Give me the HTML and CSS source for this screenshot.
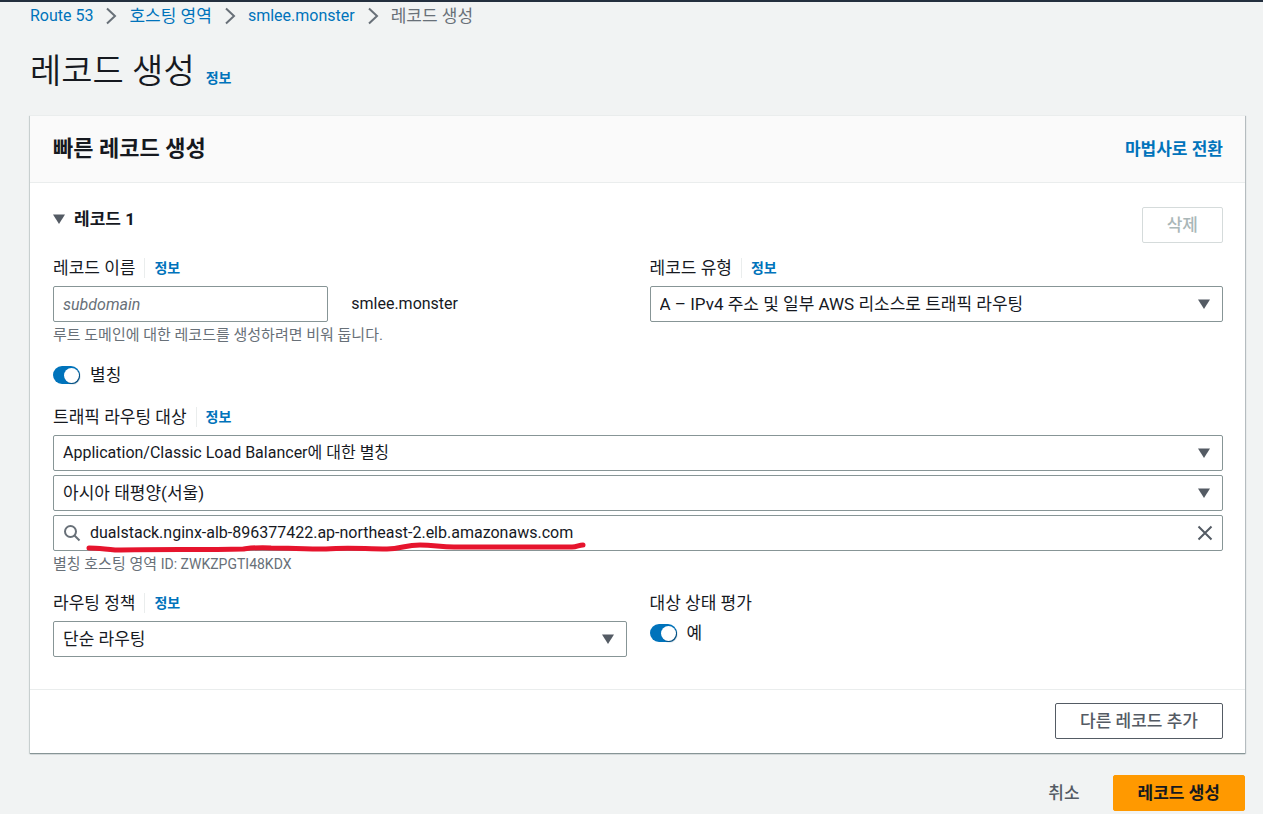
FILE: index.html
```html
<!DOCTYPE html>
<html lang="ko">
<head>
<meta charset="utf-8">
<meta name="viewport" content="width=device-width, initial-scale=1">
<title>레코드 생성</title>
<link rel="stylesheet" href="styles.css">
</head>
<body>
<nav class="breadcrumb" aria-label="이동 경로">
  <a class="latin" href="#">Route 53</a>
  <svg class="chevron" viewBox="0 0 12 18" aria-hidden="true"><path d="M2 1.500L10 9L2 16.500"/></svg>
  <a href="#">호스팅 영역</a>
  <svg class="chevron" viewBox="0 0 12 18" aria-hidden="true"><path d="M2 1.500L10 9L2 16.500"/></svg>
  <a class="latin" href="#">smlee.monster</a>
  <svg class="chevron" viewBox="0 0 12 18" aria-hidden="true"><path d="M2 1.500L10 9L2 16.500"/></svg>
  <span>레코드 생성</span>
</nav>
<main>
  <header class="title">
    <h1>레코드 생성</h1>
    <a class="info" href="#">정보</a>
  </header>
  <form>
    <section class="card">
      <header class="card-head">
        <h2>빠른 레코드 생성</h2>
        <a class="switch-link" href="#">마법사로 전환</a>
      </header>
      <div class="card-body">
        <div class="record-head">
          <h3><svg class="triangle" viewBox="0 0 12 10" aria-hidden="true"><path d="M0 0.500H12L6 10Z"/></svg>레코드 1</h3>
          <button class="button delete" type="button" disabled>삭제</button>
        </div>
        <div class="columns">
          <div class="field">
            <div class="label-row"><label for="name">레코드 이름</label><a class="info" href="#">정보</a></div>
            <div class="name-row">
              <input class="control" id="name" type="text" placeholder="subdomain">
              <span class="latin">smlee.monster</span>
            </div>
            <p class="hint">루트 도메인에 대한 레코드를 생성하려면 비워 둡니다.</p>
          </div>
          <div class="field">
            <div class="label-row"><label for="type">레코드 유형</label><a class="info" href="#">정보</a></div>
            <div class="select">
              <select class="control" id="type"><option>A – IPv4 주소 및 일부 AWS 리소스로 트래픽 라우팅</option></select>
              <svg class="triangle" viewBox="0 0 12 10" aria-hidden="true"><path d="M0 0.500H12L6 10Z"/></svg>
            </div>
          </div>
        </div>
        <label class="toggle alias"><input type="checkbox" role="switch" checked>별칭</label>
        <div class="field target">
          <div class="label-row"><label for="target">트래픽 라우팅 대상</label><a class="info" href="#">정보</a></div>
          <div class="stack">
            <div class="select">
              <select class="control latin" id="target"><option>Application/Classic Load Balancer에 대한 별칭</option></select>
              <svg class="triangle" viewBox="0 0 12 10" aria-hidden="true"><path d="M0 0.500H12L6 10Z"/></svg>
            </div>
            <div class="select">
              <select class="control" aria-label="리전"><option>아시아 태평양(서울)</option></select>
              <svg class="triangle" viewBox="0 0 12 10" aria-hidden="true"><path d="M0 0.500H12L6 10Z"/></svg>
            </div>
            <div class="search control">
              <svg class="glass" viewBox="0 0 18 18" aria-hidden="true"><circle cx="7.500" cy="7.500" r="5.500"/><path d="M11.500 11.500L16.500 16.500"/></svg>
              <input type="text" aria-label="로드 밸런서" value="dualstack.nginx-alb-896377422.ap-northeast-2.elb.amazonaws.com">
              <button class="clear" type="button" aria-label="지우기"><svg viewBox="0 0 16 16" aria-hidden="true"><path d="M1.500 1.500L14.500 14.500M14.500 1.500L1.500 14.500"/></svg></button>
              <svg class="marker" viewBox="0 0 504 14" aria-hidden="true"><path d="M5 8C13 8 19 9 31 10C75 9 118 10 159 9C168 8 175 7 187 8C205 8 220 9 242 9C265 7 280 9 303 9C317 9 321 5 336 5C350 5 356 7 370 7H488C493 7 495 5 499 5"/></svg>
            </div>
          </div>
          <p class="hint">별칭 호스팅 영역 <span>ID: ZWKZPGTI48KDX</span></p>
        </div>
        <div class="columns">
          <div class="field">
            <div class="label-row"><label for="policy">라우팅 정책</label><a class="info" href="#">정보</a></div>
            <div class="select">
              <select class="control" id="policy"><option>단순 라우팅</option></select>
              <svg class="triangle" viewBox="0 0 12 10" aria-hidden="true"><path d="M0 0.500H12L6 10Z"/></svg>
            </div>
          </div>
          <div class="field">
            <div class="label-row"><span id="health">대상 상태 평가</span></div>
            <label class="toggle"><input type="checkbox" role="switch" aria-describedby="health" checked>예</label>
          </div>
        </div>
      </div>
      <footer class="card-foot"><button class="button" type="button">다른 레코드 추가</button></footer>
    </section>
    <div class="actions">
      <button class="button plain" type="button">취소</button>
      <button class="button primary" type="submit">레코드 생성</button>
    </div>
  </form>
</main>
</body>
</html>
```
FILE: styles.css
```css
* { box-sizing: border-box; }
body {
  margin: 0;
  border-top: 2px solid #232f3e;
  background: #f1f3f3;
  color: #16191f;
  font: 17px/24px Roboto, "Noto Sans CJK KR", sans-serif;
}
h1, h2, h3, p { margin: 0; }
a { color: #0073bb; text-decoration: none; }
input, select, button { font: inherit; color: inherit; }
svg { display: block; flex: none; fill: none; }
.latin { font-size: 16px; }

.breadcrumb { display: flex; align-items: center; gap: 12px; padding: 2px 30px 0; color: #687078; }
.chevron { width: 12px; height: 18px; stroke: #687078; stroke-width: 2; }

main { padding: 0 18px 3px 30px; }
.title { display: flex; align-items: baseline; gap: 11px; padding: 19px 0 20px; }
h1 { font-size: 34px; line-height: 48px; font-weight: 350; }
.info { font-size: 14px; line-height: 20px; font-weight: 700; }

.card {
  background: #fff;
  border-top: 1px solid #eaeded;
  box-shadow: 0 1px 1px #879596, 1px 1px 1px #bfc5c8, -1px 1px 1px #d5dbdb;
}
.card-head {
  display: flex; align-items: center; justify-content: space-between;
  padding: 17px 22px 17px 23px; background: #fafafa; border-bottom: 1px solid #eaeded;
}
h2 { font-size: 22px; line-height: 32px; font-weight: 700; }
.switch-link { font-weight: 700; }
.card-body { padding: 24px 22px 32px 23px; }
.record-head { display: flex; justify-content: space-between; }
h3 { display: flex; align-items: center; gap: 9px; height: 24px; font-size: 17px; font-weight: 700; }
.triangle { width: 12px; height: 10px; fill: #545b64; }

.columns { display: grid; grid-template-columns: 1fr 1fr; gap: 23px; }
.record-head + .columns { margin-top: 13px; }
.label-row { display: flex; align-items: center; height: 24px; margin-bottom: 6px; }
.label-row .info { margin-left: 9px; padding-left: 9px; border-left: 1px solid #eaeded; }
.control {
  width: 100%; height: 36px; padding: 0 9px;
  background: #fff; border: 1px solid #879596; border-radius: 2px;
}
.name-row { display: grid; grid-template-columns: 1fr 1fr; gap: 23px; align-items: center; }
.name-row input { font-size: 16px; }
input::placeholder { color: #687078; font-style: italic; opacity: 1; }
.hint { padding-top: 1px; font-size: 15px; line-height: 24px; color: #687078; }
.hint span { font-size: 14px; }
.select { display: grid; align-items: center; }
.select > * { grid-area: 1 / 1; }
.select .triangle { justify-self: end; margin-right: 13px; pointer-events: none; }
select { appearance: none; }

.toggle { display: flex; align-items: center; gap: 10px; width: fit-content; }
.toggle input {
  appearance: none; display: flex; justify-content: flex-end; align-items: center;
  width: 27px; height: 18px; margin: 0; padding: 1px; border-radius: 9px; background: #0073bb;
}
.toggle input::before {
  content: ""; width: 15px; height: 15px; border-radius: 50%;
  background: #fff; box-shadow: 1px 1px 1px #00497a;
}
.alias { margin: 16px 0 18px; }
.stack { display: grid; gap: 4px; }
.target { margin-bottom: 15px; }
.search { position: relative; display: flex; align-items: center; gap: 9px; }
.search input { flex: 1; min-width: 0; padding: 0; border: 0; background: none; font-size: 16px; }
.glass { width: 18px; height: 18px; stroke: #687078; stroke-width: 2; }
.clear { padding: 0; border: 0; background: none; }
.clear svg { width: 16px; height: 16px; stroke: #545b64; stroke-width: 2; }
.marker {
  position: absolute; left: 30px; top: 24px; width: 504px; height: 14px;
  stroke: #e6142d; stroke-width: 5; stroke-linecap: round; pointer-events: none;
}
.card-foot { display: flex; justify-content: flex-end; padding: 13px 22px 14px; border-top: 1px solid #eaeded; }
.button {
  height: 36px; padding: 0 24px; border: 1px solid #545b64; border-radius: 2px;
  background: #fff; color: #545b64; font-weight: 500;
}
.delete { color: #aab7b8; border-color: #d5dbdb; }
.actions { display: flex; justify-content: flex-end; gap: 8px; padding-top: 22px; }
.plain { border-color: transparent; background: none; }
.primary { border-color: #ff9900; background: #ff9900; color: #16191f; font-weight: 700; }
```
